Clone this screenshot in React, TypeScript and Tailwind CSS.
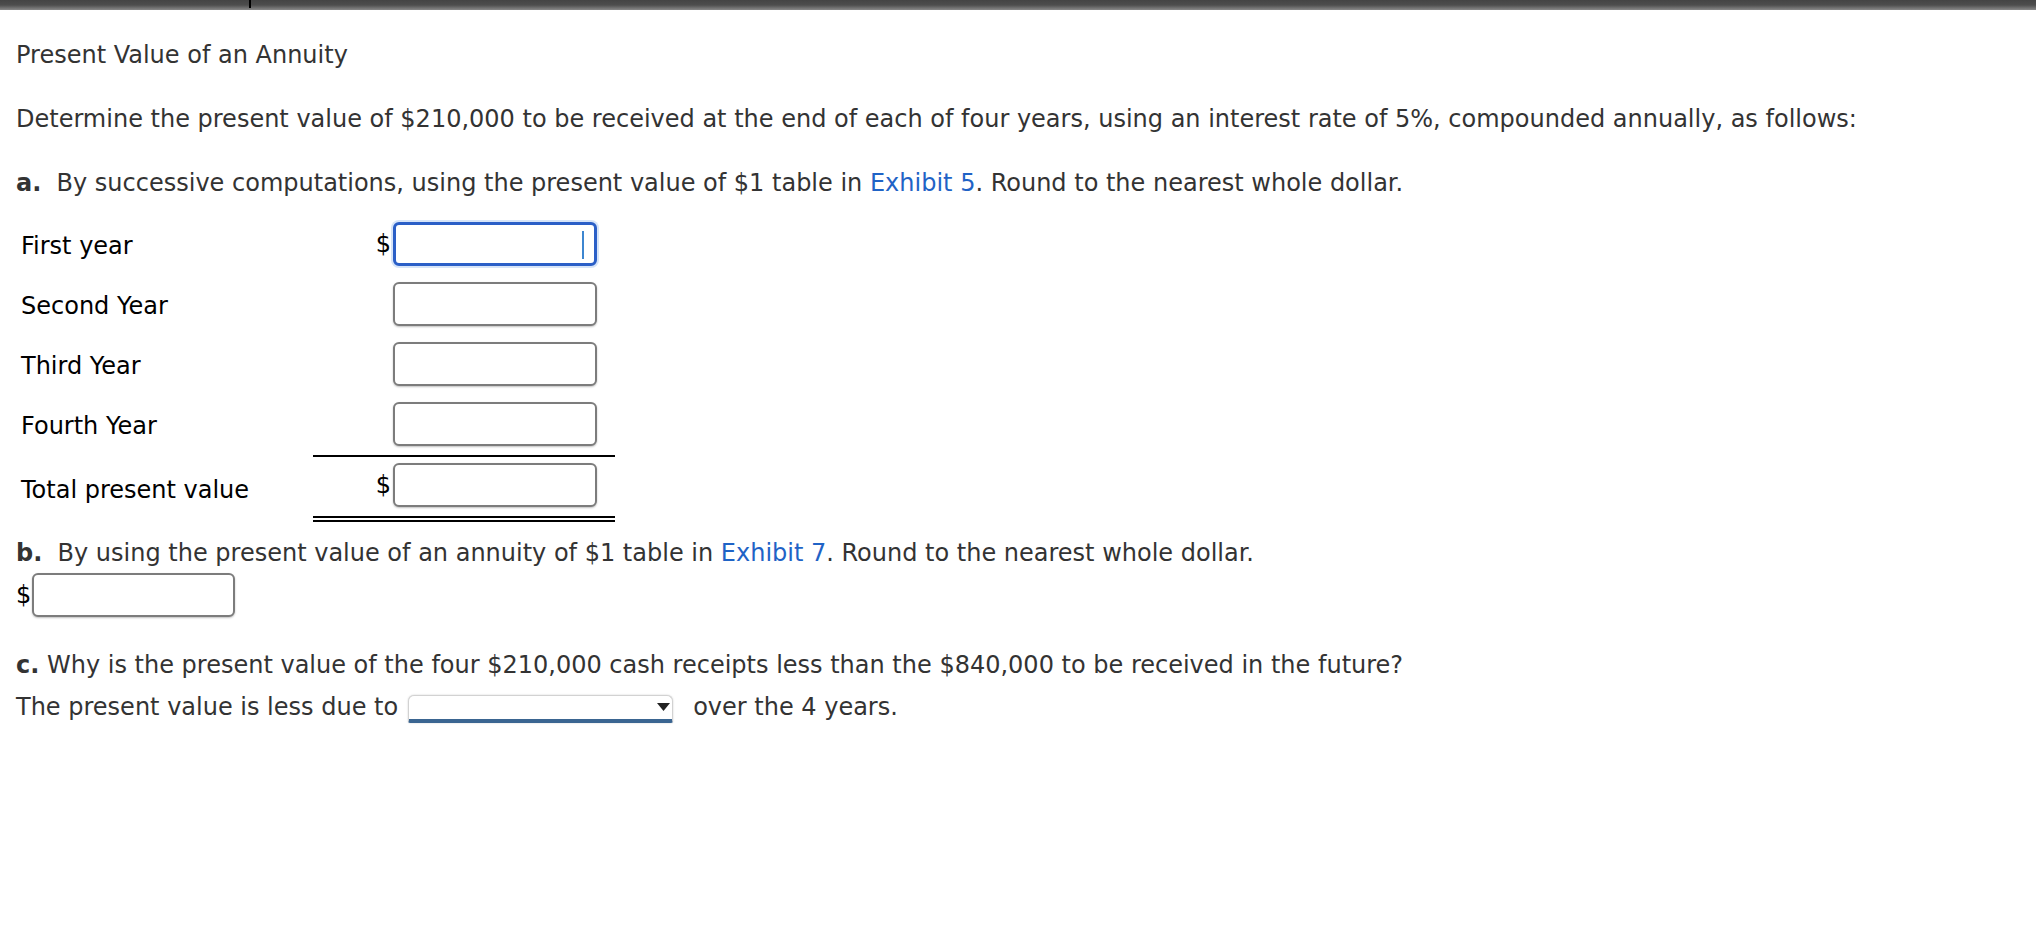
import React from 'react';

const font = "font-['DejaVu_Sans',Verdana,sans-serif]";

const rows = [
  { label: 'First year', dollar: true, focused: true },
  { label: 'Second Year', dollar: false, focused: false },
  { label: 'Third Year', dollar: false, focused: false },
  { label: 'Fourth Year', dollar: false, focused: false },
];

const AmountInput = ({ focused, width = 'w-[204px]' }: { focused?: boolean; width?: string }) => {
  if (focused) {
    return (
      <div className={`relative h-[44px] ${width} rounded-[6px] border-[3px] border-[#2b5fc7] bg-white shadow-[0_0_0_2px_#d6e4f8]`}>
        {/* caret */}
        <div className="absolute right-[10px] top-[6px] h-[28px] w-[2px] bg-[#3d86d0]" />
      </div>
    );
  }
  return (
    <div
      className={`h-[44px] ${width} rounded-[6px] border-2 border-[#7c7c7c] bg-white shadow-[0_1px_2px_rgba(0,0,0,0.25)]`}
    />
  );
};

export default function App() {
  return (
    <div className={`min-h-screen w-full bg-white ${font} text-[24px] text-[#333]`}>
      {/* window top bar */}
      <div className="relative h-[10px] w-full bg-gradient-to-b from-[#444] via-[#4d4d4d] to-[#8a8a8a]">
        <div className="absolute left-[249px] top-0 h-[8px] w-[2px] bg-black" />
      </div>

      <div className="pl-4">
        <div className="mt-[29px] leading-[32px]">Present Value of an Annuity</div>

        <div className="mt-[32px] leading-[32px]">
          Determine the present value of $210,000 to be received at the end of each of four years, using an interest
          rate of 5%, compounded annually, as follows:
        </div>

        <div className="mt-[32px] leading-[32px]">
          <span className="font-bold">a.</span>&nbsp; By successive computations, using the present value of $1 table
          in <span className="text-[#1f63c6]">Exhibit 5</span>. Round to the nearest whole dollar.
        </div>

        {/* part a table */}
        <div className="mt-[23px] w-[599px] text-black">
          <div className="flex flex-col gap-[16px]">
            {rows.map((r) => (
              <div key={r.label} className="flex h-[44px] items-center">
                <div className="w-[297px] pl-[5px] pt-[3px]">{r.label}</div>
                <div className="flex w-[302px] items-center justify-end pr-[18px]">
                  {r.dollar && <span className="mr-[2px]">$</span>}
                  <AmountInput focused={r.focused} />
                </div>
              </div>
            ))}
          </div>

          <div className="mt-[9px] flex items-stretch">
            <div className="flex w-[297px] items-center pl-[5px] pt-[2px]">Total present value</div>
            <div className="flex w-[302px] items-center justify-end border-t-2 border-b-[6px] border-double border-t-black border-b-black pb-[9px] pr-[18px] pt-[6px]">
              <span className="mr-[2px]">$</span>
              <AmountInput />
            </div>
          </div>
        </div>

        <div className="mt-[15px] leading-[32px]">
          <span className="font-bold">b.</span>&nbsp; By using the present value of an annuity of $1 table in{' '}
          <span className="text-[#1f63c6]">Exhibit 7</span>. Round to the nearest whole dollar.
        </div>

        <div className="mt-[4px] flex items-center text-black">
          <span className="mr-[1px]">$</span>
          <AmountInput width="w-[203px]" />
        </div>

        <div className="mt-[32px] leading-[32px]">
          <span className="font-bold">c.</span> Why is the present value of the four $210,000 cash receipts less than the
          $840,000 to be received in the future?
        </div>

        <div className="mt-[10px] flex h-[32px] items-center leading-[32px]">
          <span>The present value is less due to</span>
          <div className="relative ml-[10px] mt-[4px] h-[28px] w-[265px] rounded-t-[6px] rounded-b-[2px] border border-b-4 border-[#d2d2d2] border-b-[#3a6591] bg-white shadow-[0_0_2px_rgba(0,0,0,0.2)]">
            <svg className="absolute right-[2px] top-[7px]" width="13" height="8" viewBox="0 0 13 8">
              <path d="M0 0 L13 0 L6.5 8 Z" fill="#222" />
            </svg>
          </div>
          <span className="ml-[20px]">over the 4 years.</span>
        </div>
      </div>
    </div>
  );
}
